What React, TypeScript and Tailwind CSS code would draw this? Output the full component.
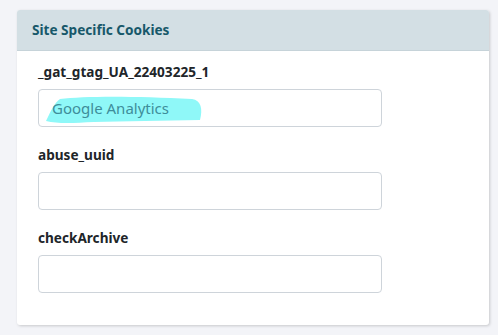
const fields = [
  { name: '_gat_gtag_UA_22403225_1', value: 'Google Analytics', marked: true },
  { name: 'abuse_uuid', value: '' },
  { name: 'checkArchive', value: '' },
]

function Highlight() {
  // marker scribble over the first value
  return (
    <svg className="absolute left-[5px] top-[3px]" width="160" height="32" viewBox="0 0 160 32">
      <path
        d="M2 28 C 6 20, 10 10, 16 6 C 40 3, 90 3, 148 6 C 157 7, 159 16, 156 27 C 120 28, 80 28, 50 29 C 30 30, 14 31, 2 28 Z"
        fill="#8ff8f8"
      />
    </svg>
  )
}

export default function App() {
  return (
    <div className="min-h-screen bg-[#f3f4f8] pt-[10px] pl-[17px] font-['Noto_Sans','Open_Sans',sans-serif]">
      <div className="w-[472px] h-[315px] bg-white rounded-[3px] shadow-[1px_1px_3px_rgba(0,0,0,0.18)]">
        <div className="h-[41px] bg-[#d3dfe4] border-b border-[#c6d3d9] rounded-t-[3px] px-[15px] flex items-center">
          <h2 className="text-[13.6px] font-bold text-[#17586a]">Site Specific Cookies</h2>
        </div>
        <div className="px-[21px] pt-[11px] flex flex-col">
          {fields.map((f, i) => (
            <div key={f.name} className={i > 0 ? 'mt-[18px]' : ''}>
              <label className="block text-[13.6px] leading-[20px] font-bold text-[#212529]">{f.name}</label>
              <div className="relative mt-[7px] w-[344px] h-[38px] border border-[#ced4da] rounded-[4px] bg-white flex items-center px-[13px]">
                {f.marked && <Highlight />}
                <span className="relative text-[15px] text-[#3e8d9a]">{f.value}</span>
              </div>
            </div>
          ))}
        </div>
      </div>
    </div>
  )
}
